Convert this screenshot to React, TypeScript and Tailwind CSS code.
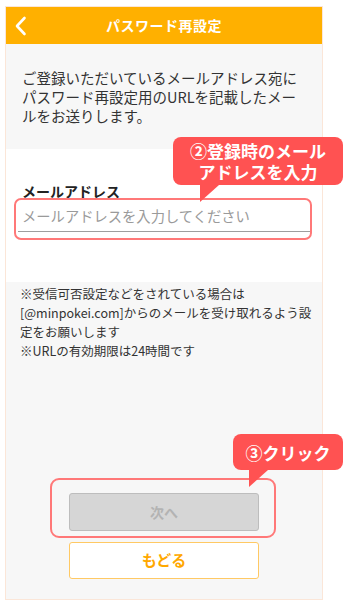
import React from "react";

const font = { fontFamily: '"Noto Sans CJK JP", "Noto Sans", sans-serif' };

function Callout({
  lines,
  className,
  tailLeft,
}: {
  lines: string[];
  className: string;
  tailLeft: number;
}) {
  return (
    <div className={`absolute ${className}`}>
      <div className="flex h-full flex-col items-center justify-center rounded-[8px] bg-[#ff5252] text-[17px] font-bold leading-[21px] text-white">
        {lines.map((l) => (
          <span key={l}>{l}</span>
        ))}
      </div>
      <svg
        className="absolute top-full"
        style={{ left: tailLeft }}
        width="19"
        height="17"
        viewBox="0 0 19 17"
      >
        <path d="M0 0 L19 0 L0 17 Z" fill="#ff5252" />
      </svg>
    </div>
  );
}

export default function App() {
  return (
    <div className="relative h-[609px] w-[353px] overflow-hidden bg-white" style={font}>
      <div className="ml-[5px] mt-[6px] flex h-[594px] w-[318px] flex-col border border-[#fbe6d8] bg-[#f7f7f7]">
        <div className="relative flex h-[37px] shrink-0 items-center justify-center bg-[#ffb000]">
          <svg
            className="absolute left-[8px] top-[9px]"
            width="13"
            height="20"
            viewBox="0 0 13 20"
          >
            <path
              d="M10.5 2 L3 10 L10.5 18"
              fill="none"
              stroke="white"
              strokeWidth="2.6"
              strokeLinecap="round"
              strokeLinejoin="round"
            />
          </svg>
          <span className="text-[14px] font-bold tracking-[0.5px] text-white">パスワード再設定</span>
        </div>

        <div className="h-[105px] shrink-0 px-[16px] pt-[24px] text-[14.5px] leading-[19px] text-[#333]">
          ご登録いただいているメールアドレス宛に
          <br />
          パスワード再設定用のURLを記載したメー
          <br />
          ルをお送りします。
        </div>

        <div className="h-[133px] shrink-0 bg-white px-[12px] pt-[32px]">
          <div className="px-[4px] text-[14px] font-bold leading-[20px] text-[#222]">メールアドレス</div>
          <div className="mt-[4px] border-b border-[#9e9e9e] px-[4px] pb-[5px] text-[14.3px] leading-[21px] text-[#9a9a9a]">
            メールアドレスを入力してください
          </div>
        </div>

        <div className="whitespace-nowrap pl-[14px] pr-[2px] pt-[2px] text-[12.5px] leading-[19px] text-[#333]">
          <p>※受信可否設定などをされている場合は</p>
          <p>
            [@minpokei.com]からのメールを受け取れるよう設
            <br />
            定をお願いします
          </p>
          <p>※URLの有効期限は24時間です</p>
        </div>

        <div className="mt-auto flex flex-col items-center gap-[11px] pb-[20px]">
          <div className="flex h-[38px] w-[190px] items-center justify-center rounded-[3px] border border-[#bdbdbd] bg-[#d6d6d6] text-[14px] font-bold text-[#b3b3b3]">
            次へ
          </div>
          <div className="flex h-[37px] w-[190px] items-center justify-center rounded-[3px] border border-[#ffc964] bg-white text-[15px] font-bold text-[#ffa800]">
            もどる
          </div>
        </div>
      </div>

      <div className="absolute left-[14px] top-[198px] h-[42px] w-[298px] rounded-[7px] border-[2.5px] border-[#ff7878]" />
      <div className="absolute left-[50px] top-[478px] h-[60px] w-[226px] rounded-[9px] border-[2.5px] border-[#ff7878]" />

      <Callout
        lines={["②登録時のメール", "アドレスを入力"]}
        className="left-[173px] top-[137px] h-[48px] w-[170px]"
        tailLeft={27}
      />
      <Callout lines={["③クリック"]} className="left-[233px] top-[434px] h-[36px] w-[110px]" tailLeft={16} />
    </div>
  );
}
